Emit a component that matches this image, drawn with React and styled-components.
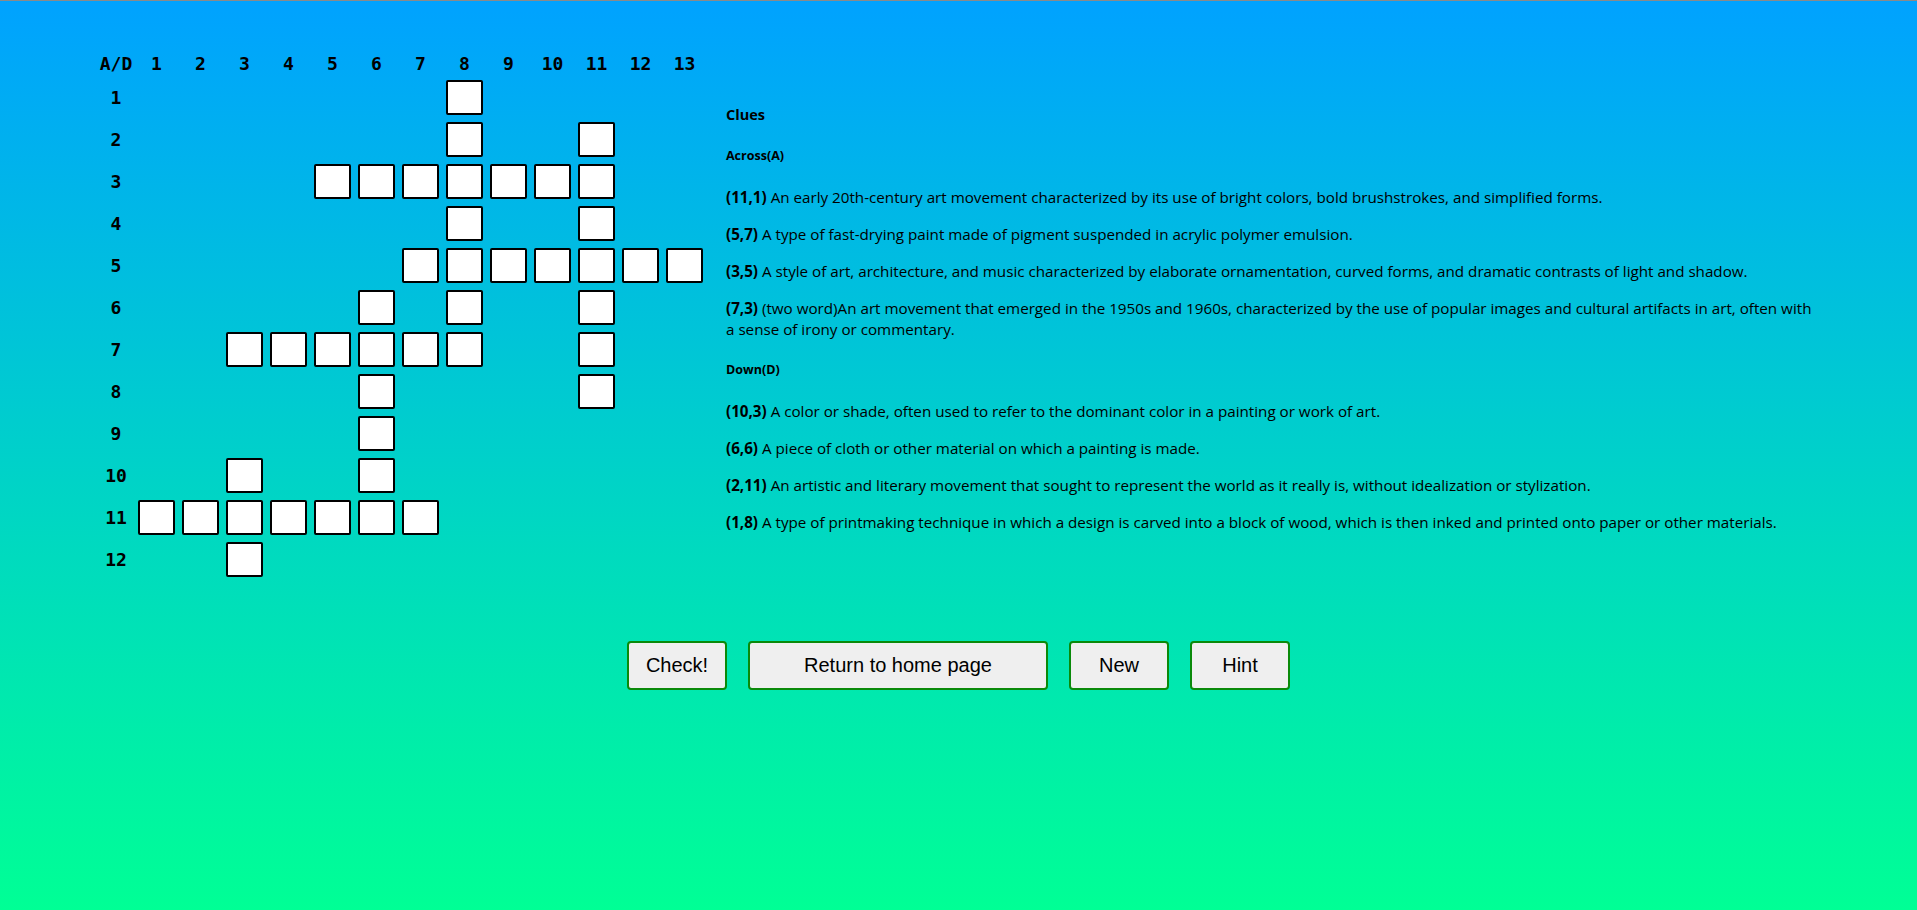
import React from 'react';
import styled, { createGlobalStyle } from 'styled-components';

const GlobalStyle = createGlobalStyle`
  html, body {
    margin: 0;
    padding: 0;
  }
  * {
    box-sizing: border-box;
  }
`;

const Page = styled.div`
  min-height: 100vh;
  border-top: 1px solid #8a8a8a;
  background: linear-gradient(to bottom, #00a2ff 0%, #00ff95 100%);
  padding-top: 54px;
`;

const Puzzle = styled.div`
  display: flex;
  align-items: flex-start;
  gap: 23px;
  padding-left: 101px;
`;

const Board = styled.div`
  display: grid;
  grid-template-columns: 30px repeat(13, 37px);
  grid-template-rows: 18px repeat(12, 35px);
  column-gap: 7px;
  row-gap: 7px;
  font-family: 'DejaVu Sans Mono', 'Liberation Mono', monospace;
  font-size: 18px;
  font-weight: bold;
  color: #000;
`;

const Label = styled.div`
  display: flex;
  align-items: center;
  justify-content: center;
  line-height: 18px;
  white-space: nowrap;
`;

const Cell = styled.input`
  width: 37px;
  height: 35px;
  margin: 0;
  padding: 0;
  border: 2px solid #000;
  border-radius: 2px;
  background: #fff;
  text-align: center;
  font-family: 'DejaVu Sans Mono', monospace;
  font-size: 18px;
  outline: none;
`;

const Blank = styled.div``;

const CluePanel = styled.div`
  width: 1096px;
  padding-top: 50px;
  font-family: 'Open Sans', 'Noto Sans', sans-serif;
  color: #000;
`;

const Title = styled.div`
  font-size: 14.5px;
  font-weight: bold;
  line-height: 20px;
  margin: 0 0 21px;
`;

const Section = styled.div`
  font-size: 12.5px;
  font-weight: bold;
  line-height: 20px;
  margin: 20px 0 21px;
`;

const Clue = styled.p`
  font-size: 15.2px;
  line-height: 21px;
  margin: 16px 0;

  b {
    font-weight: bold;
  }
`;

const Buttons = styled.div`
  display: flex;
  justify-content: center;
  gap: 21px;
  margin-top: 64px;
`;

const Button = styled.button`
  width: ${p => (p.$wide ? '300px' : '100px')};
  height: 49px;
  border: 2px solid #0a8a0a;
  border-radius: 4px;
  background: #efefef;
  color: #000;
  font-family: 'Liberation Sans', Arial, sans-serif;
  font-size: 20px;
  cursor: pointer;
`;

const filled = {
  1: [8],
  2: [8, 11],
  3: [5, 6, 7, 8, 9, 10, 11],
  4: [8, 11],
  5: [7, 8, 9, 10, 11, 12, 13],
  6: [6, 8, 11],
  7: [3, 4, 5, 6, 7, 8, 11],
  8: [6, 11],
  9: [6],
  10: [3, 6],
  11: [1, 2, 3, 4, 5, 6, 7],
  12: [3],
};

const across = [
  ['(11,1)', 'An early 20th-century art movement characterized by its use of bright colors, bold brushstrokes, and simplified forms.'],
  ['(5,7)', 'A type of fast-drying paint made of pigment suspended in acrylic polymer emulsion.'],
  ['(3,5)', 'A style of art, architecture, and music characterized by elaborate ornamentation, curved forms, and dramatic contrasts of light and shadow.'],
  ['(7,3)', '(two word)An art movement that emerged in the 1950s and 1960s, characterized by the use of popular images and cultural artifacts in art, often with a sense of irony or commentary.'],
];

const down = [
  ['(10,3)', 'A color or shade, often used to refer to the dominant color in a painting or work of art.'],
  ['(6,6)', 'A piece of cloth or other material on which a painting is made.'],
  ['(2,11)', 'An artistic and literary movement that sought to represent the world as it really is, without idealization or stylization.'],
  ['(1,8)', 'A type of printmaking technique in which a design is carved into a block of wood, which is then inked and printed onto paper or other materials.'],
];

const cols = Array.from({ length: 13 }, (_, i) => i + 1);
const rows = Array.from({ length: 12 }, (_, i) => i + 1);

function renderBoard() {
  const items = [<Label key="ad">A/D</Label>];
  cols.forEach(c => items.push(<Label key={`h${c}`}>{c}</Label>));
  rows.forEach(r => {
    items.push(<Label key={`r${r}`}>{r}</Label>);
    cols.forEach(c => {
      const key = `${r}-${c}`;
      items.push(
        filled[r].includes(c) ? <Cell key={key} maxLength={1} /> : <Blank key={key} />,
      );
    });
  });
  return items;
}

export default function App() {
  return (
    <>
      <GlobalStyle />
      <Page>
        <Puzzle>
          <Board>{renderBoard()}</Board>
          <CluePanel>
            <Title>Clues</Title>
            <Section>Across(A)</Section>
            {across.map(([pos, text]) => (
              <Clue key={pos}>
                <b>{pos}</b> {text}
              </Clue>
            ))}
            <Section>Down(D)</Section>
            {down.map(([pos, text]) => (
              <Clue key={pos}>
                <b>{pos}</b> {text}
              </Clue>
            ))}
          </CluePanel>
        </Puzzle>
        <Buttons>
          <Button>Check!</Button>
          <Button $wide>Return to home page</Button>
          <Button>New</Button>
          <Button>Hint</Button>
        </Buttons>
      </Page>
    </>
  );
}
